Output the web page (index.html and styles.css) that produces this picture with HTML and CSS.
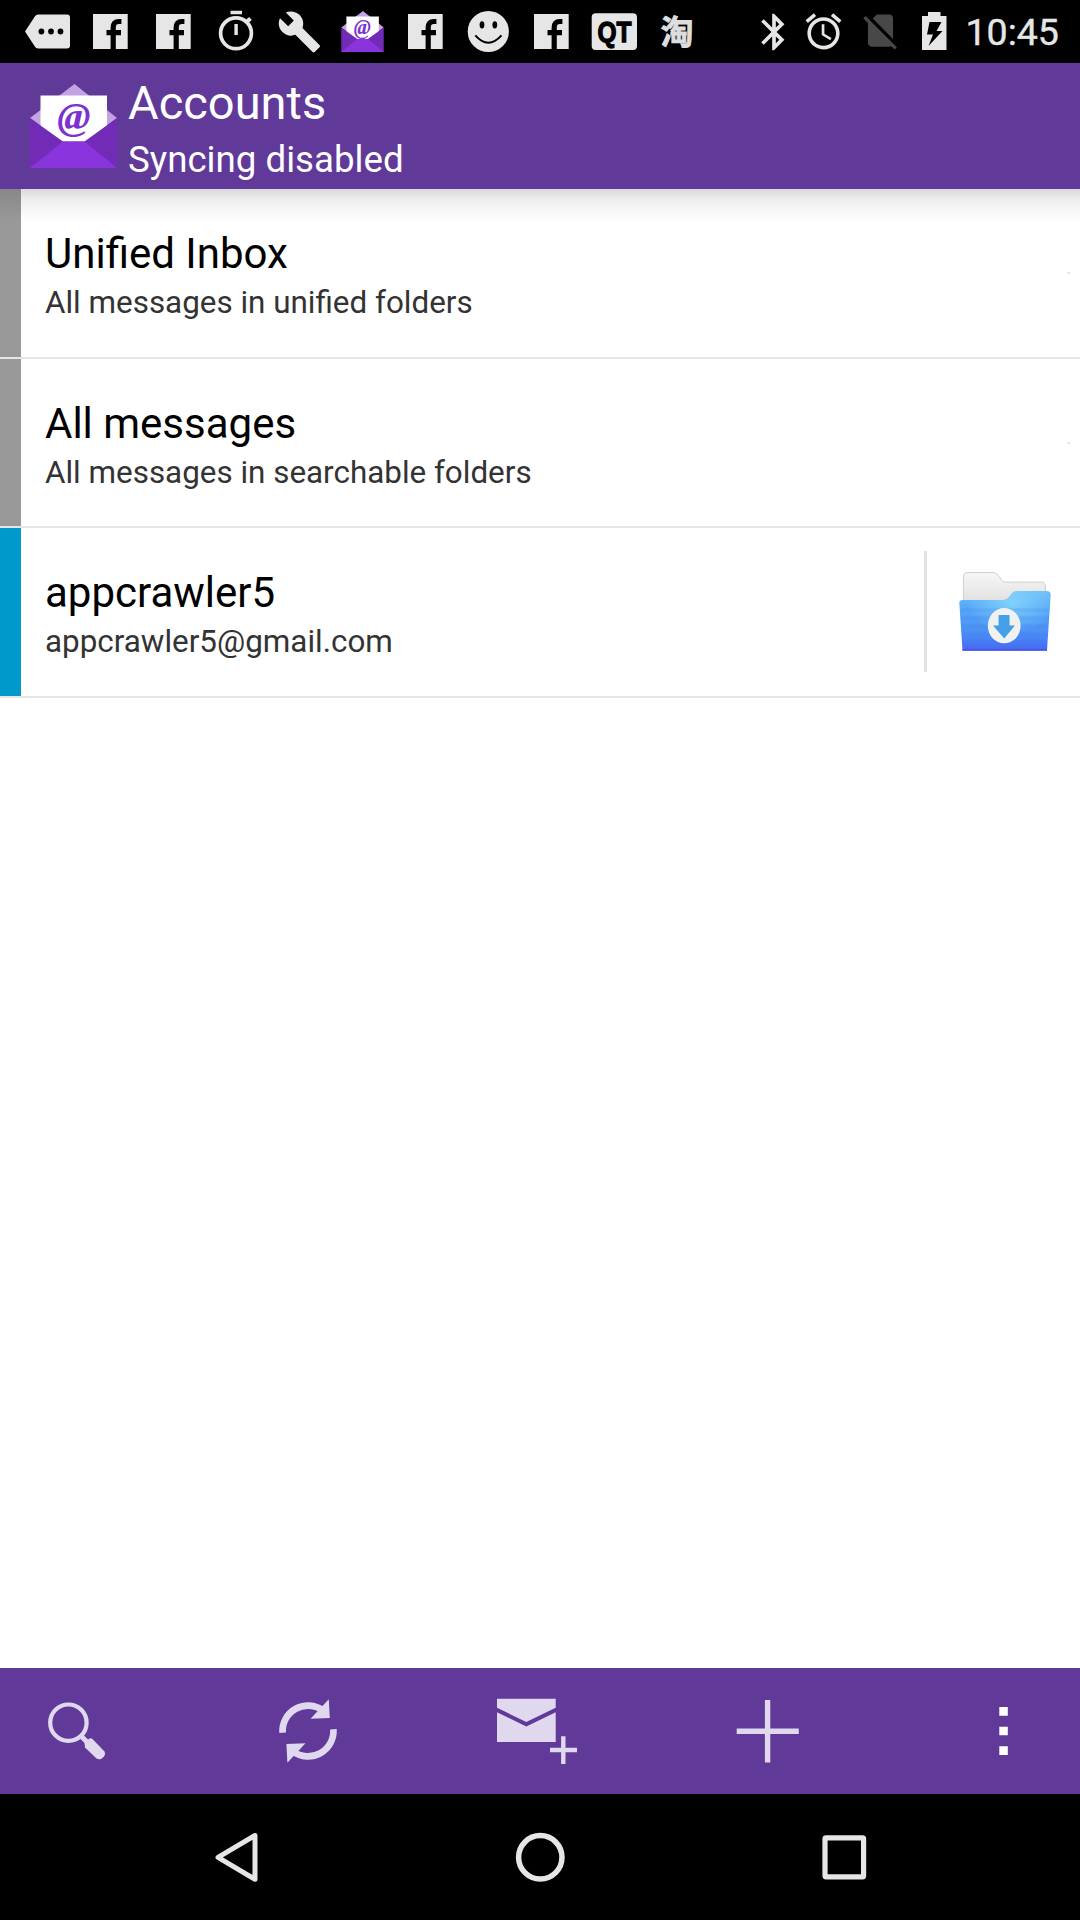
FILE: index.html
```html
<!DOCTYPE html>
<html lang="en">
<head>
<meta charset="utf-8">
<title>Accounts</title>
<link rel="stylesheet" href="styles.css">
</head>
<body>
<svg class="defs" width="0" height="0" aria-hidden="true">
  <symbol id="mail" viewBox="0 0 87 84">
    <path fill="#c3a3e2" d="M44.5 0L87 34 44 66 0 34z"/>
    <path fill="#fff" d="M10.5 11.5H77V46L54 60H33L10.5 44z"/>
    <path fill="#722bb6" d="M0 34L33 57.5H54.5L87 34V84H0z"/>
    <path fill="#8934dc" d="M33 57.5H54.5L87 84H0z"/>
  </symbol>
  <symbol id="fb" viewBox="0 0 63 63">
    <path fill="#e6e6e6" d="M14 14H48.7V49H14z"/>
    <path fill="none" stroke="#000" stroke-width="5.2" d="M34.2 49.2V27.5q0-6 5.6-6h2.6M27.5 32.6H42"/>
  </symbol>
</svg>
<div class="screen">
  <header class="status">
    <div class="notes">
      <svg viewBox="0 0 63 63"><path fill="#e6e6e6" d="M9 31.5L19 16.3Q20 14.6 22 14.6H51Q54 14.6 54 17.6V45.4Q54 48.4 51 48.4H22Q20 48.4 19 46.7z"/><circle cx="25.4" cy="31.5" r="2.9"/><circle cx="35" cy="31.5" r="2.9"/><circle cx="44.5" cy="31.5" r="2.9"/></svg>
      <svg><use href="#fb"/></svg>
      <svg><use href="#fb"/></svg>
      <svg viewBox="0 0 63 63" fill="#e6e6e6"><circle cx="31" cy="33.3" r="15.4" fill="none" stroke="#e6e6e6" stroke-width="3.7"/><path d="M25.5 10.8H37V14.2H25.5zM29.4 24H32.8V35H29.4z"/><path d="M42 21.5L45.5 18.5" stroke="#e6e6e6" stroke-width="4"/></svg>
      <svg viewBox="0 0 63 63"><path transform="translate(9 9.4) scale(1.87)" fill="#e6e6e6" d="M22.7 19l-9.1-9.1c.9-2.3.4-5-1.5-6.9-2-2-5-2.4-7.4-1.3L9 6 6 9 1.6 4.7C.4 7.1.9 10.1 2.9 12.1c1.9 1.9 4.6 2.4 6.9 1.5l9.1 9.1c.4.4 1 .4 1.4 0l2.3-2.3c.5-.4.5-1.1.1-1.4z"/></svg>
      <svg viewBox="0 0 63 63"><use href="#mail" x="9" y="11" width="45" height="41"/><text x="31.3" y="33.8" text-anchor="middle" class="at small">@</text></svg>
      <svg><use href="#fb"/></svg>
      <svg viewBox="0 0 63 63"><circle cx="31.3" cy="31.5" r="20.6" fill="#e6e6e6"/><ellipse cx="25" cy="24.8" rx="2.4" ry="3.6"/><ellipse cx="37.8" cy="24.8" rx="2.4" ry="3.6"/><path d="M18.3 35.3Q31.3 50 44.5 35.3" fill="none" stroke="#000" stroke-width="2"/></svg>
      <svg><use href="#fb"/></svg>
      <svg viewBox="0 0 63 63"><rect x="8.7" y="13.2" width="45.3" height="36.8" rx="4" fill="#e6e6e6"/><text x="14.5" y="42" textLength="34" lengthAdjust="spacingAndGlyphs" class="qt">QT</text></svg>
      <svg viewBox="0 0 63 63"><text x="14.5" y="43.8" class="tao">淘</text></svg>
    </div>
    <div class="system">
      <svg class="bt" viewBox="0 0 24 24"><path d="M17.71 7.71L12 2h-1v7.59L6.41 5 5 6.41 10.59 12 5 17.59 6.41 19 11 14.41V22h1l5.71-5.71-4.3-4.29 4.3-4.29zM13 5.83l1.88 1.88L13 9.59V5.83zm1.88 10.46L13 18.17v-3.76l1.88 1.88z"/></svg>
      <svg class="alarm" viewBox="0 0 24 24"><path d="M22 5.72l-4.6-3.86-1.29 1.53 4.6 3.86L22 5.72zM7.88 3.39L6.6 1.86 2 5.71l1.29 1.53 4.59-3.85zM12.5 8H11v6l4.75 2.85.75-1.23-4-2.37V8zM12 4c-4.97 0-9 4.03-9 9s4.02 9 9 9a9 9 0 0 0 0-18zm0 16c-3.87 0-7-3.13-7-7s3.13-7 7-7 7 3.13 7 7-3.13 7-7 7z"/></svg>
      <svg class="sim" viewBox="0 0 24 24"><path d="M18.99 5c0-1.1-.89-2-1.99-2h-7L7.66 5.34 19 16.68 18.99 5zM3.65 3.88L2.38 5.15 5 7.77V19c0 1.1.9 2 2 2h10.01c.35 0 .67-.1.96-.26l1.88 1.88 1.27-1.27L3.65 3.88z"/></svg>
      <svg class="battery" viewBox="0 0 25 38"><path d="M6 0H18.5V4H24.5V38H0V4H6z"/><path fill="#000" d="M7.5 10H19.5L14.5 19H20.5L6.5 34 11 22.5H5z"/></svg>
      <span class="clock">10:45</span>
    </div>
  </header>

  <div class="appbar">
    <svg class="logo" viewBox="0 0 87 84"><use href="#mail"/><text x="44" y="45.5" text-anchor="middle" class="at">@</text></svg>
    <div class="heading">
      <div class="title">Accounts</div>
      <div class="subtitle">Syncing disabled</div>
    </div>
  </div>

  <main class="list">
    <div class="row">
      <div class="chip"></div>
      <div class="text"><div class="name">Unified Inbox</div><div class="desc">All messages in unified folders</div></div>
      <div class="speck"></div>
    </div>
    <div class="row short">
      <div class="chip"></div>
      <div class="text"><div class="name">All messages</div><div class="desc">All messages in searchable folders</div></div>
      <div class="speck"></div>
    </div>
    <div class="row">
      <div class="chip blue"></div>
      <div class="text"><div class="name">appcrawler5</div><div class="desc">appcrawler5@gmail.com</div></div>
      <div class="folder">
        <svg viewBox="0 0 92 79">
          <defs>
            <linearGradient id="paper" x1="0" y1="0" x2="0" y2="1"><stop offset="0" stop-color="#f6f6f6"/><stop offset="1" stop-color="#dedede"/></linearGradient>
            <linearGradient id="front" x1="0" y1="0" x2="0" y2="1"><stop offset="0" stop-color="#6cbcf8"/><stop offset=".25" stop-color="#58aaf6"/><stop offset=".7" stop-color="#4b8ff4"/><stop offset="1" stop-color="#4668f2"/></linearGradient>
            <radialGradient id="glow" cx=".58" cy=".2" r=".5"><stop offset="0" stop-color="#8fe0ff" stop-opacity=".7"/><stop offset="1" stop-color="#8fe0ff" stop-opacity="0"/></radialGradient>
          </defs>
          <path fill="url(#paper)" stroke="#c6c6c6" stroke-width=".8" d="M4.4 34V5Q4.4.5 9 .5H34Q37 .5 39 3L43 8.5Q44.5 10 47 10H82Q86.5 10 86.5 15V34z"/>
          <path fill="url(#front)" d="M.3 31Q.3 28 3.5 28H44Q48 28 50 25L52 22.5Q54 19 58 19H88Q92 19 91.6 24L88 78.5H3.5z"/>
          <path fill="url(#glow)" d="M.3 31Q.3 28 3.5 28H44Q48 28 50 25L52 22.5Q54 19 58 19H88Q92 19 91.6 24L88 78.5H3.5z"/>
          <path stroke="#3f7df0" stroke-opacity=".16" stroke-width="3.5" d="M2 38H90M2 46H90M3 54H89M3 62H89M3 70H88"/>
          <path stroke="#4a4fe8" stroke-width="1.6" d="M3.5 77.9H88"/>
          <ellipse cx="45.2" cy="53.7" rx="16.4" ry="17.6" fill="#f1f1f1"/>
          <path fill="#459fe8" d="M39.6 43H50.5V53.5H56L45.2 66.5 34 53.5H39.6z"/>
        </svg>
      </div>
    </div>
  </main>

  <nav class="toolbar">
    <svg viewBox="0 0 100 126"><circle cx="41.4" cy="54.7" r="18.2" class="line" stroke-width="4.2"/><path class="line" stroke-width="5" d="M54 68L61 75"/><path d="M57.5 74.5L62.5 70.5Q64 70 65.5 71L77.5 83.5Q79 86 77 88.5L74.5 90.7Q72 92 69.5 90.5L58 79.5z"/></svg>
    <svg viewBox="0 0 100 126"><path class="line" stroke-width="6.7" d="M24.6 64.7A25.4 25.4 0 0 1 65 42.5M75.4 61.3A25.4 25.4 0 0 1 35 83.5"/><path d="M70.8 31.3L71.8 50 52.5 50.7zM29.4 94.7L28.4 76 47.5 75.3z"/></svg>
    <svg viewBox="0 0 100 126"><path d="M9 30.8H67.7V39.8L38.3 54 9 39.8zM9 44.2L38.3 58.5 67.7 44.2V74H9z"/><path class="line" stroke-width="4.4" d="M75.3 68.3V96M62 82H89"/></svg>
    <svg viewBox="0 0 100 126"><path class="line" stroke-width="5.4" d="M48.6 32V94.5M17.7 63.2H79.8"/></svg>
    <svg viewBox="0 0 100 126"><path fill="#fff" d="M50.3 39H58.8V47.7H50.3zM50.3 58.7H58.8V67.3H50.3zM50.3 78.3H58.8V87H50.3z"/></svg>
  </nav>

  <footer class="sysnav">
    <svg viewBox="0 0 100 126"><path d="M69 41.5V85.3L32 63.4z" stroke-width="5" stroke-linejoin="round"/></svg>
    <svg viewBox="0 0 100 126"><circle cx="50.3" cy="63.3" r="21.7" stroke-width="5.5"/></svg>
    <svg viewBox="0 0 100 126"><rect x="31" y="43.8" width="38.6" height="39" rx="1" stroke-width="5.2"/></svg>
  </footer>
</div>
</body>
</html>
```

FILE: styles.css
```css
* { box-sizing: border-box; }
body { margin: 0; background: #fff; font-family: Roboto, "Noto Sans CJK SC", sans-serif; }
.defs { position: absolute; }
.screen { width: 1080px; height: 1920px; display: flex; flex-direction: column; overflow: hidden; }

.status { height: 63px; background: #000; display: flex; justify-content: space-between; padding: 0 21px 0 16px; }
.notes { display: flex; }
.notes svg { width: 63px; height: 63px; flex: none; }
.system { display: flex; align-items: flex-start; fill: #e6e6e6; }
.system svg { flex: none; width: 43px; height: 43px; }
.system .bt { width: 44px; height: 44px; margin-top: 9.5px; margin-right: 6px; }
.system .alarm { margin-top: 10.2px; margin-right: 14px; }
.system .sim { margin-top: 9px; margin-right: 20px; fill: #484848; }
.system .battery { width: 25px; height: 38px; margin-top: 12px; margin-right: 19px; }
.clock { font-size: 37.5px; line-height: 63px; color: #e6e6e6; padding-top: 1px; white-space: nowrap; width: 93.5px; -webkit-text-stroke: 0.4px #e6e6e6; }

.at { font: italic bold 40px "Liberation Serif", serif; fill: #7c31d0; }
.at.small { font-size: 20.5px; }
.qt { font: bold 30px "Liberation Sans", sans-serif; fill: #000; stroke: #000; stroke-width: 1.3; }
.tao { font: bold 33px "Noto Sans CJK SC", sans-serif; fill: #dedede; stroke: #dedede; stroke-width: 0.8; }

.appbar { height: 126px; background: #603999; display: flex; padding: 21px 0 0 30px; color: #fff; }
.logo { width: 87px; height: 84px; flex: none; }
.heading { margin-left: 11px; margin-top: -8px; }
.title { font-size: 47px; line-height: 54px; }
.subtitle { font-size: 36.7px; line-height: 44px; margin-top: 8px; }

.list { flex: 1; background: linear-gradient(#d9d9d9, #f0f0f0 12px, #fff 33px); }
.row { height: 170px; display: flex; border-bottom: 2px solid #e6e6e6; }
.row.short { height: 169px; }
.chip { width: 21px; background: #999; }
.row:first-child .chip { background: linear-gradient(#888, #999 33px); }
.chip.blue { background: #0099cc; }
.text { flex: 1; padding: 40px 0 0 24px; }
.name { font-size: 42px; line-height: 50px; color: #000; }
.desc { font-size: 31.4px; line-height: 40px; margin-top: 4px; color: #333; }
.speck { width: 3px; height: 2px; background: #e8e8e8; margin: 83px 10px 0 0; }
.folder { width: 156px; height: 121px; margin-top: 23px; padding: 21px 0 0 32px; border-left: 3px solid #e2e2e2; }
.folder svg { width: 92px; height: 79px; display: block; }

.toolbar { height: 126px; background: #603999; display: flex; gap: 130.5px; padding-left: 27px; fill: #e0d8ee; }
.toolbar svg { width: 100px; height: 126px; flex: none; }
.line { fill: none; stroke: #e0d8ee; }
.sysnav { height: 126px; background: #000; display: flex; justify-content: center; gap: 204px; fill: none; stroke: #e6e6e6; }
.sysnav svg { width: 100px; height: 126px; flex: none; }
```
